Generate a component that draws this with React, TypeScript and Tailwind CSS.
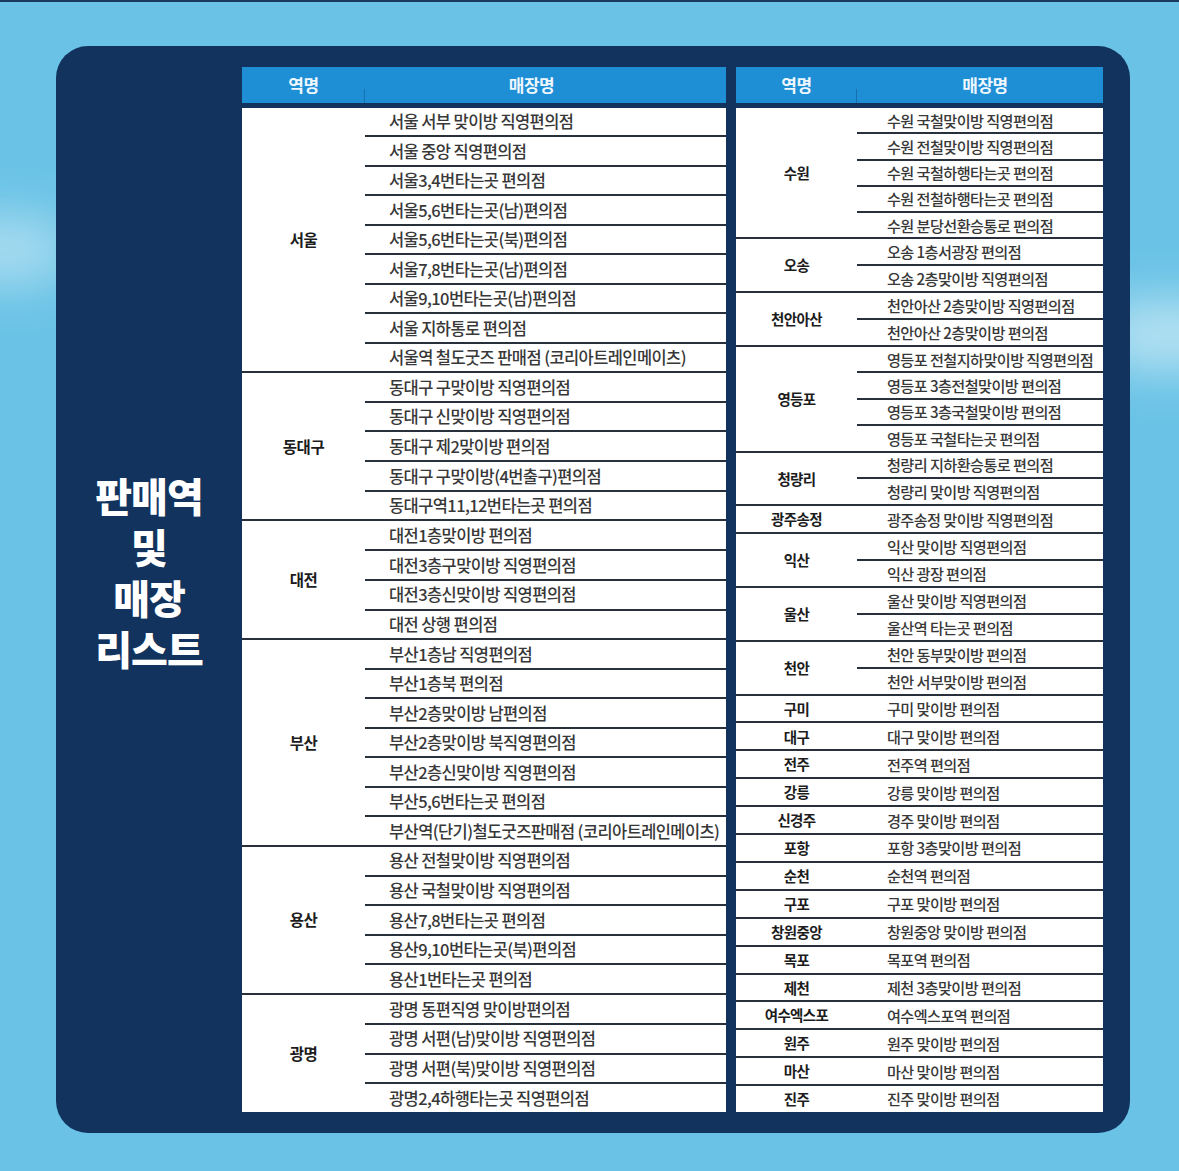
import React from "react"

type Group = { station: string; stores: string[] }

const leftGroups: Group[] = [
  {
    station: "서울",
    stores: [
      "서울 서부 맞이방 직영편의점",
      "서울 중앙 직영편의점",
      "서울3,4번타는곳 편의점",
      "서울5,6번타는곳(남)편의점",
      "서울5,6번타는곳(북)편의점",
      "서울7,8번타는곳(남)편의점",
      "서울9,10번타는곳(남)편의점",
      "서울 지하통로 편의점",
      "서울역 철도굿즈 판매점 (코리아트레인메이츠)",
    ],
  },
  {
    station: "동대구",
    stores: [
      "동대구 구맞이방 직영편의점",
      "동대구 신맞이방 직영편의점",
      "동대구 제2맞이방 편의점",
      "동대구 구맞이방(4번출구)편의점",
      "동대구역11,12번타는곳 편의점",
    ],
  },
  {
    station: "대전",
    stores: ["대전1층맞이방 편의점", "대전3층구맞이방 직영편의점", "대전3층신맞이방 직영편의점", "대전 상행 편의점"],
  },
  {
    station: "부산",
    stores: [
      "부산1층남 직영편의점",
      "부산1층북 편의점",
      "부산2층맞이방 남편의점",
      "부산2층맞이방 북직영편의점",
      "부산2층신맞이방 직영편의점",
      "부산5,6번타는곳 편의점",
      "부산역(단기)철도굿즈판매점 (코리아트레인메이츠)",
    ],
  },
  {
    station: "용산",
    stores: [
      "용산 전철맞이방 직영편의점",
      "용산 국철맞이방 직영편의점",
      "용산7,8번타는곳 편의점",
      "용산9,10번타는곳(북)편의점",
      "용산1번타는곳 편의점",
    ],
  },
  {
    station: "광명",
    stores: [
      "광명 동편직영 맞이방편의점",
      "광명 서편(남)맞이방 직영편의점",
      "광명 서편(북)맞이방 직영편의점",
      "광명2,4하행타는곳 직영편의점",
    ],
  },
]

const rightGroups: Group[] = [
  {
    station: "수원",
    stores: [
      "수원 국철맞이방 직영편의점",
      "수원 전철맞이방 직영편의점",
      "수원 국철하행타는곳 편의점",
      "수원 전철하행타는곳 편의점",
      "수원 분당선환승통로 편의점",
    ],
  },
  { station: "오송", stores: ["오송 1층서광장 편의점", "오송 2층맞이방 직영편의점"] },
  { station: "천안아산", stores: ["천안아산 2층맞이방 직영편의점", "천안아산 2층맞이방 편의점"] },
  {
    station: "영등포",
    stores: [
      "영등포 전철지하맞이방 직영편의점",
      "영등포 3층전철맞이방 편의점",
      "영등포 3층국철맞이방 편의점",
      "영등포 국철타는곳 편의점",
    ],
  },
  { station: "청량리", stores: ["청량리 지하환승통로 편의점", "청량리 맞이방 직영편의점"] },
  { station: "광주송정", stores: ["광주송정 맞이방 직영편의점"] },
  { station: "익산", stores: ["익산 맞이방 직영편의점", "익산 광장 편의점"] },
  { station: "울산", stores: ["울산 맞이방 직영편의점", "울산역 타는곳 편의점"] },
  { station: "천안", stores: ["천안 동부맞이방 편의점", "천안 서부맞이방 편의점"] },
  { station: "구미", stores: ["구미 맞이방 편의점"] },
  { station: "대구", stores: ["대구 맞이방 편의점"] },
  { station: "전주", stores: ["전주역 편의점"] },
  { station: "강릉", stores: ["강릉 맞이방 편의점"] },
  { station: "신경주", stores: ["경주 맞이방 편의점"] },
  { station: "포항", stores: ["포항 3층맞이방 편의점"] },
  { station: "순천", stores: ["순천역 편의점"] },
  { station: "구포", stores: ["구포 맞이방 편의점"] },
  { station: "창원중앙", stores: ["창원중앙 맞이방 편의점"] },
  { station: "목포", stores: ["목포역 편의점"] },
  { station: "제천", stores: ["제천 3층맞이방 편의점"] },
  { station: "여수엑스포", stores: ["여수엑스포역 편의점"] },
  { station: "원주", stores: ["원주 맞이방 편의점"] },
  { station: "마산", stores: ["마산 맞이방 편의점"] },
  { station: "진주", stores: ["진주 맞이방 편의점"] },
]

const font = { fontFamily: '"Noto Sans CJK KR", "Noto Sans", sans-serif' }

interface TableProps {
  groups: Group[]
  wide?: boolean
}

function StoreTable(props: TableProps) {
  const wide = props.wide
  return (
    <div className={wide ? "flex flex-col w-[484px]" : "flex flex-col w-[367px]"}>
      <div
        className={
          wide
            ? "grid grid-cols-[123px_1fr] h-[36px] bg-[#1e8ed5] text-[#eef7fd] font-bold text-[17px] tracking-[-0.5px]"
            : "grid grid-cols-[121px_1fr] h-[36px] bg-[#1e8ed5] text-[#eef7fd] font-bold text-[17px] tracking-[-0.5px]"
        }
      >
        <div className="relative flex items-center justify-center">
          역명
          <span className="absolute right-0 bottom-0 h-[14px] w-px bg-[#1a6fae]" />
        </div>
        <div className={wide ? "flex items-center justify-center pr-[28px]" : "flex items-center justify-center pl-[10px]"}>
          매장명
        </div>
      </div>
      <div className="mt-[5px] h-[1004px] flex flex-col bg-white">
        {props.groups.map((g, gi) => (
          <div
            key={g.station}
            className={
              (wide ? "grid grid-cols-[123px_1fr]" : "grid grid-cols-[121px_1fr]") +
              (gi < props.groups.length - 1 ? " border-b-2 border-[#27303b]" : "")
            }
            style={{ flexGrow: g.stores.length, flexBasis: 0 }}
          >
            <div
              className={
                wide
                  ? "flex items-center justify-center font-bold text-[15.5px] tracking-[-0.5px] text-[#1c1c1c]"
                  : "flex items-center justify-center font-bold text-[14.5px] tracking-[-0.6px] text-[#1c1c1c]"
              }
            >
              {g.station}
            </div>
            <div className="flex flex-col">
              {g.stores.map((s, si) => (
                <div
                  key={s}
                  className={
                    (wide
                      ? "flex-1 flex items-center pl-[24px] text-[16.5px] tracking-[-0.6px]"
                      : "flex-1 flex items-center pl-[30px] text-[15.2px] tracking-[-0.6px]") +
                    " font-medium text-[#383838] whitespace-nowrap leading-none" +
                    (si < g.stores.length - 1 ? " border-b-2 border-[#27303b]" : "")
                  }
                >
                  {s}
                </div>
              ))}
            </div>
          </div>
        ))}
      </div>
    </div>
  )
}

export default function App() {
  return (
    <div className="relative w-[1179px] h-[1171px] overflow-hidden bg-[#6ac3e6] pt-[46px] pl-[56px]" style={font}>
      <div className="absolute top-0 left-0 w-full h-[2px] bg-[#1b3a5e]" />
      <div className="absolute left-[-80px] top-[215px] w-[150px] h-[70px] rounded-full bg-white/40 blur-xl" />
      <div className="absolute right-[-60px] top-[300px] w-[140px] h-[70px] rounded-full bg-white/50 blur-xl" />
      <div className="relative flex w-[1074px] h-[1087px] rounded-[32px] bg-[#11335e]">
        <div className="w-[186px] flex items-center justify-center pb-[36px]">
          <div className="flex flex-col items-center gap-[11px] text-white font-black text-[40px] leading-none tracking-[-1px]">
            <span>판매역</span>
            <span>및</span>
            <span>매장</span>
            <span>리스트</span>
          </div>
        </div>
        <div className="flex gap-[10px] pt-[21px]">
          <StoreTable groups={leftGroups} wide />
          <StoreTable groups={rightGroups} />
        </div>
      </div>
    </div>
  )
}
